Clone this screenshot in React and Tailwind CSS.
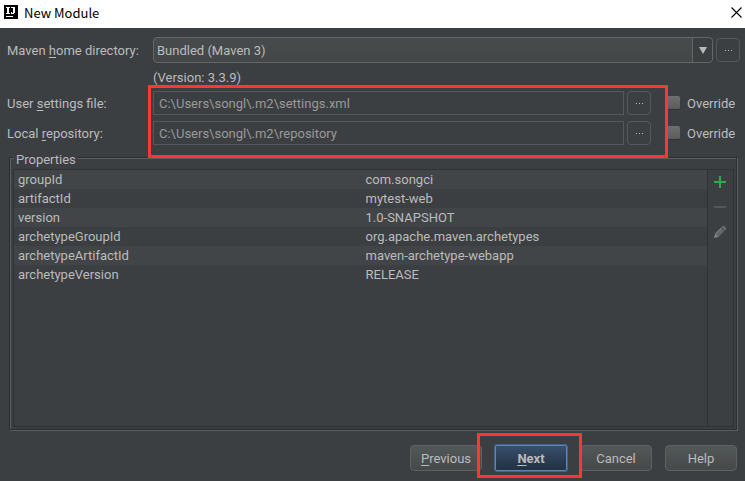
import React, { useState } from 'react';

const mavenHomes = ['Bundled (Maven 3)', 'Bundled (Maven 2)'];

const properties = [
  { name: 'groupId', value: 'com.songci' },
  { name: 'artifactId', value: 'mytest-web' },
  { name: 'version', value: '1.0-SNAPSHOT' },
  { name: 'archetypeGroupId', value: 'org.apache.maven.archetypes' },
  { name: 'archetypeArtifactId', value: 'maven-archetype-webapp' },
  { name: 'archetypeVersion', value: 'RELEASE' },
];

// underlined letter of a label
const Key = ({ children }) => <span className="underline underline-offset-2">{children}</span>;

const DotsButton = ({ label }) => (
  <button
    type="button"
    aria-label={label}
    className="h-6 w-6 shrink-0 rounded-sm border border-[#55595b] flex items-center justify-center"
  >
    <svg width="7" height="1" viewBox="0 0 7 1" shapeRendering="crispEdges" fill="#bbbbbb">
      <path d="M0 0h1v1H0zM3 0h1v1H3zM6 0h1v1H6z" />
    </svg>
  </button>
);

const PathRow = ({ id, label, value }) => {
  const [override, setOverride] = useState(false);
  return (
    <div className="flex items-center h-6">
      <label htmlFor={id} className="w-[146px] shrink-0">{label}</label>
      <input
        id={id}
        type="text"
        defaultValue={value}
        disabled={!override}
        className="h-6 flex-1 min-w-0 border border-[#55585a] px-[5px] text-[#999999]"
      />
      <div className="ml-[3px] mr-[15px] flex">
        <DotsButton label="Browse" />
      </div>
      <label className="w-[72px] flex items-center gap-[7px]">
        <input
          type="checkbox"
          checked={override}
          onChange={(e) => setOverride(e.target.checked)}
          className="appearance-none w-3.5 h-3.5 rounded-xs border-b border-[#2f3233] bg-linear-to-b from-[#6e6e6e] to-[#5c5c5c] checked:from-[#4b6eaf] checked:to-[#3d5a8f]"
        />
        Override
      </label>
    </div>
  );
};

const FooterButton = ({ children }) => (
  <button
    type="button"
    className="h-[26px] w-[72px] rounded-sm border border-[#5e6162] bg-linear-to-b from-[#525758] to-[#45494a]"
  >
    {children}
  </button>
);

export default function App() {
  return (
    <div className="min-h-screen flex flex-col bg-[#3c3f41] text-[#bbbbbb] text-[13px] leading-[19px] font-[Roboto,'Noto_Sans',sans-serif]">
      {/* Title bar */}
      <header className="h-7 bg-white text-black flex items-center pl-1 pr-[3px] pb-1">
        <svg width="14" height="14" viewBox="0 0 14 14" shapeRendering="crispEdges">
          <rect width="14" height="14" fill="#000" />
          <path d="M2 2h4v1H5v5h1v1H2V8h1V3H2zM7 2h4v6h-1v1H7V7h1v1h1V3H7zM2 11h7v1H2z" fill="#fff" />
        </svg>
        <h1 className="ml-1.5 flex-1 font-['Noto_Sans_CJK_SC','Noto_Sans',sans-serif]">New Module</h1>
        <button type="button" aria-label="Close">
          <svg width="11" height="11" viewBox="0 0 11 11" stroke="#000" strokeWidth="1.1">
            <path d="M.5.5l10 10M10.5.5l-10 10" />
          </svg>
        </button>
      </header>

      <main className="flex-1 flex flex-col">
        <div className="pt-[9px] pl-[7px] pr-[5px]">
          <div className="flex items-center">
            <label htmlFor="maven-home" className="w-[146px] shrink-0">
              Maven <Key>h</Key>ome directory:
            </label>
            <div className="relative flex-1 mr-[3px]">
              <select
                id="maven-home"
                className="appearance-none block w-full h-[26px] rounded-sm border border-[#646667] bg-linear-to-b from-[#484b4c] to-[#434748] pl-[3px] pr-6"
              >
                {mavenHomes.map((home) => (
                  <option key={home}>{home}</option>
                ))}
              </select>
              <span className="pointer-events-none absolute inset-y-px right-px w-5 rounded-r-sm border-l border-[#646667] bg-[#3c3f41] flex items-center justify-center">
                <svg width="8" height="7" viewBox="0 0 8 7" fill="#bbbbbb">
                  <path d="M0 0h8L4 7z" />
                </svg>
              </span>
            </div>
            <DotsButton label="Choose Maven home" />
          </div>
          <p className="h-7 ml-[146px] flex items-center">(Version: 3.3.9)</p>
        </div>

        {/* Paths */}
        <div className="relative px-[7px] flex flex-col gap-1.5">
          <PathRow id="settings" label={<>User <Key>s</Key>ettings file:</>} value="C:\Users\songl\.m2\settings.xml" />
          <PathRow id="repository" label={<>Local <Key>r</Key>epository:</>} value="C:\Users\songl\.m2\repository" />
          <div className="pointer-events-none absolute z-10 -top-1.5 -bottom-[13px] left-[148px] right-[77px] border-3 border-[#fb3838]" />
        </div>

        {/* Properties */}
        <div className="flex-1 grid mt-3 ml-[9px] mr-2">
          <fieldset className="relative grid pt-[11px] pl-[3px] pr-0.5 pb-0.5 border border-[#2c2e2f] shadow-[1px_1px_0_#5b5e60,inset_1px_1px_0_#5b5e60]">
            <legend className="absolute -top-2 left-1 px-0.5 bg-[#3c3f41]">Properties</legend>
            <div className="flex border border-[#303233]">
              <div className="flex-1">
                <table className="w-full table-fixed">
                  <tbody>
                    {properties.map((prop) => (
                      <tr key={prop.name} className="h-[19px] odd:bg-[#414547]">
                        <td className="p-0 pl-1">{prop.name}</td>
                        <td className="p-0 pl-[5px]">{prop.value}</td>
                      </tr>
                    ))}
                  </tbody>
                </table>
              </div>
              <div className="w-[26px] border-l border-[#303233] pt-1.5 pl-1.5 flex flex-col items-start gap-[13px]">
                <button type="button" aria-label="Add">
                  <svg width="12" height="12" viewBox="0 0 12 12" fill="#30a94c" className="block">
                    <path d="M5 0h2v5h5v2H7v5H5V7H0V5h5z" />
                  </svg>
                </button>
                <button type="button" aria-label="Remove">
                  <svg width="12" height="12" viewBox="0 0 12 12" fill="#595655" className="block">
                    <path d="M0 5h12v2H0z" />
                  </svg>
                </button>
                <button type="button" aria-label="Edit">
                  <svg width="12" height="12" viewBox="0 0 12 12" className="block">
                    <path d="M0 12L1.3 7.2 4.8 10.7z" fill="#858585" />
                    <path d="M1.3 7.2L7 1.5 10.5 5 4.8 10.7z" fill="#646464" />
                    <path d="M1.3 7.2L7 1.5 8 2.5 2.3 8.2z" fill="#747474" />
                    <path d="M7.4 1.1L8 .5Q9.8-.5 11.2.8T11.5 4L10.9 4.6z" fill="#6c6c6c" />
                  </svg>
                </button>
              </div>
            </div>
          </fieldset>
        </div>

        <footer className="flex justify-end gap-[13px] mt-[15px] mb-2.5 pr-2">
          <FooterButton><Key>P</Key>revious</FooterButton>
          <div className="relative z-10">
            <button
              type="button"
              className="h-[26px] w-[72px] rounded-xs border border-[#5a87b8] bg-linear-to-b from-[#384f6b] to-[#233143] font-bold shadow-[0_0_0_1px_#40648d]"
            >
              <Key>N</Key>ext
            </button>
            <div className="pointer-events-none absolute -left-[18px] -right-[15px] -top-3 -bottom-[7px] border-3 border-[#fb3838]" />
          </div>
          <FooterButton>Cancel</FooterButton>
          <FooterButton>Help</FooterButton>
        </footer>
      </main>
    </div>
  );
}
